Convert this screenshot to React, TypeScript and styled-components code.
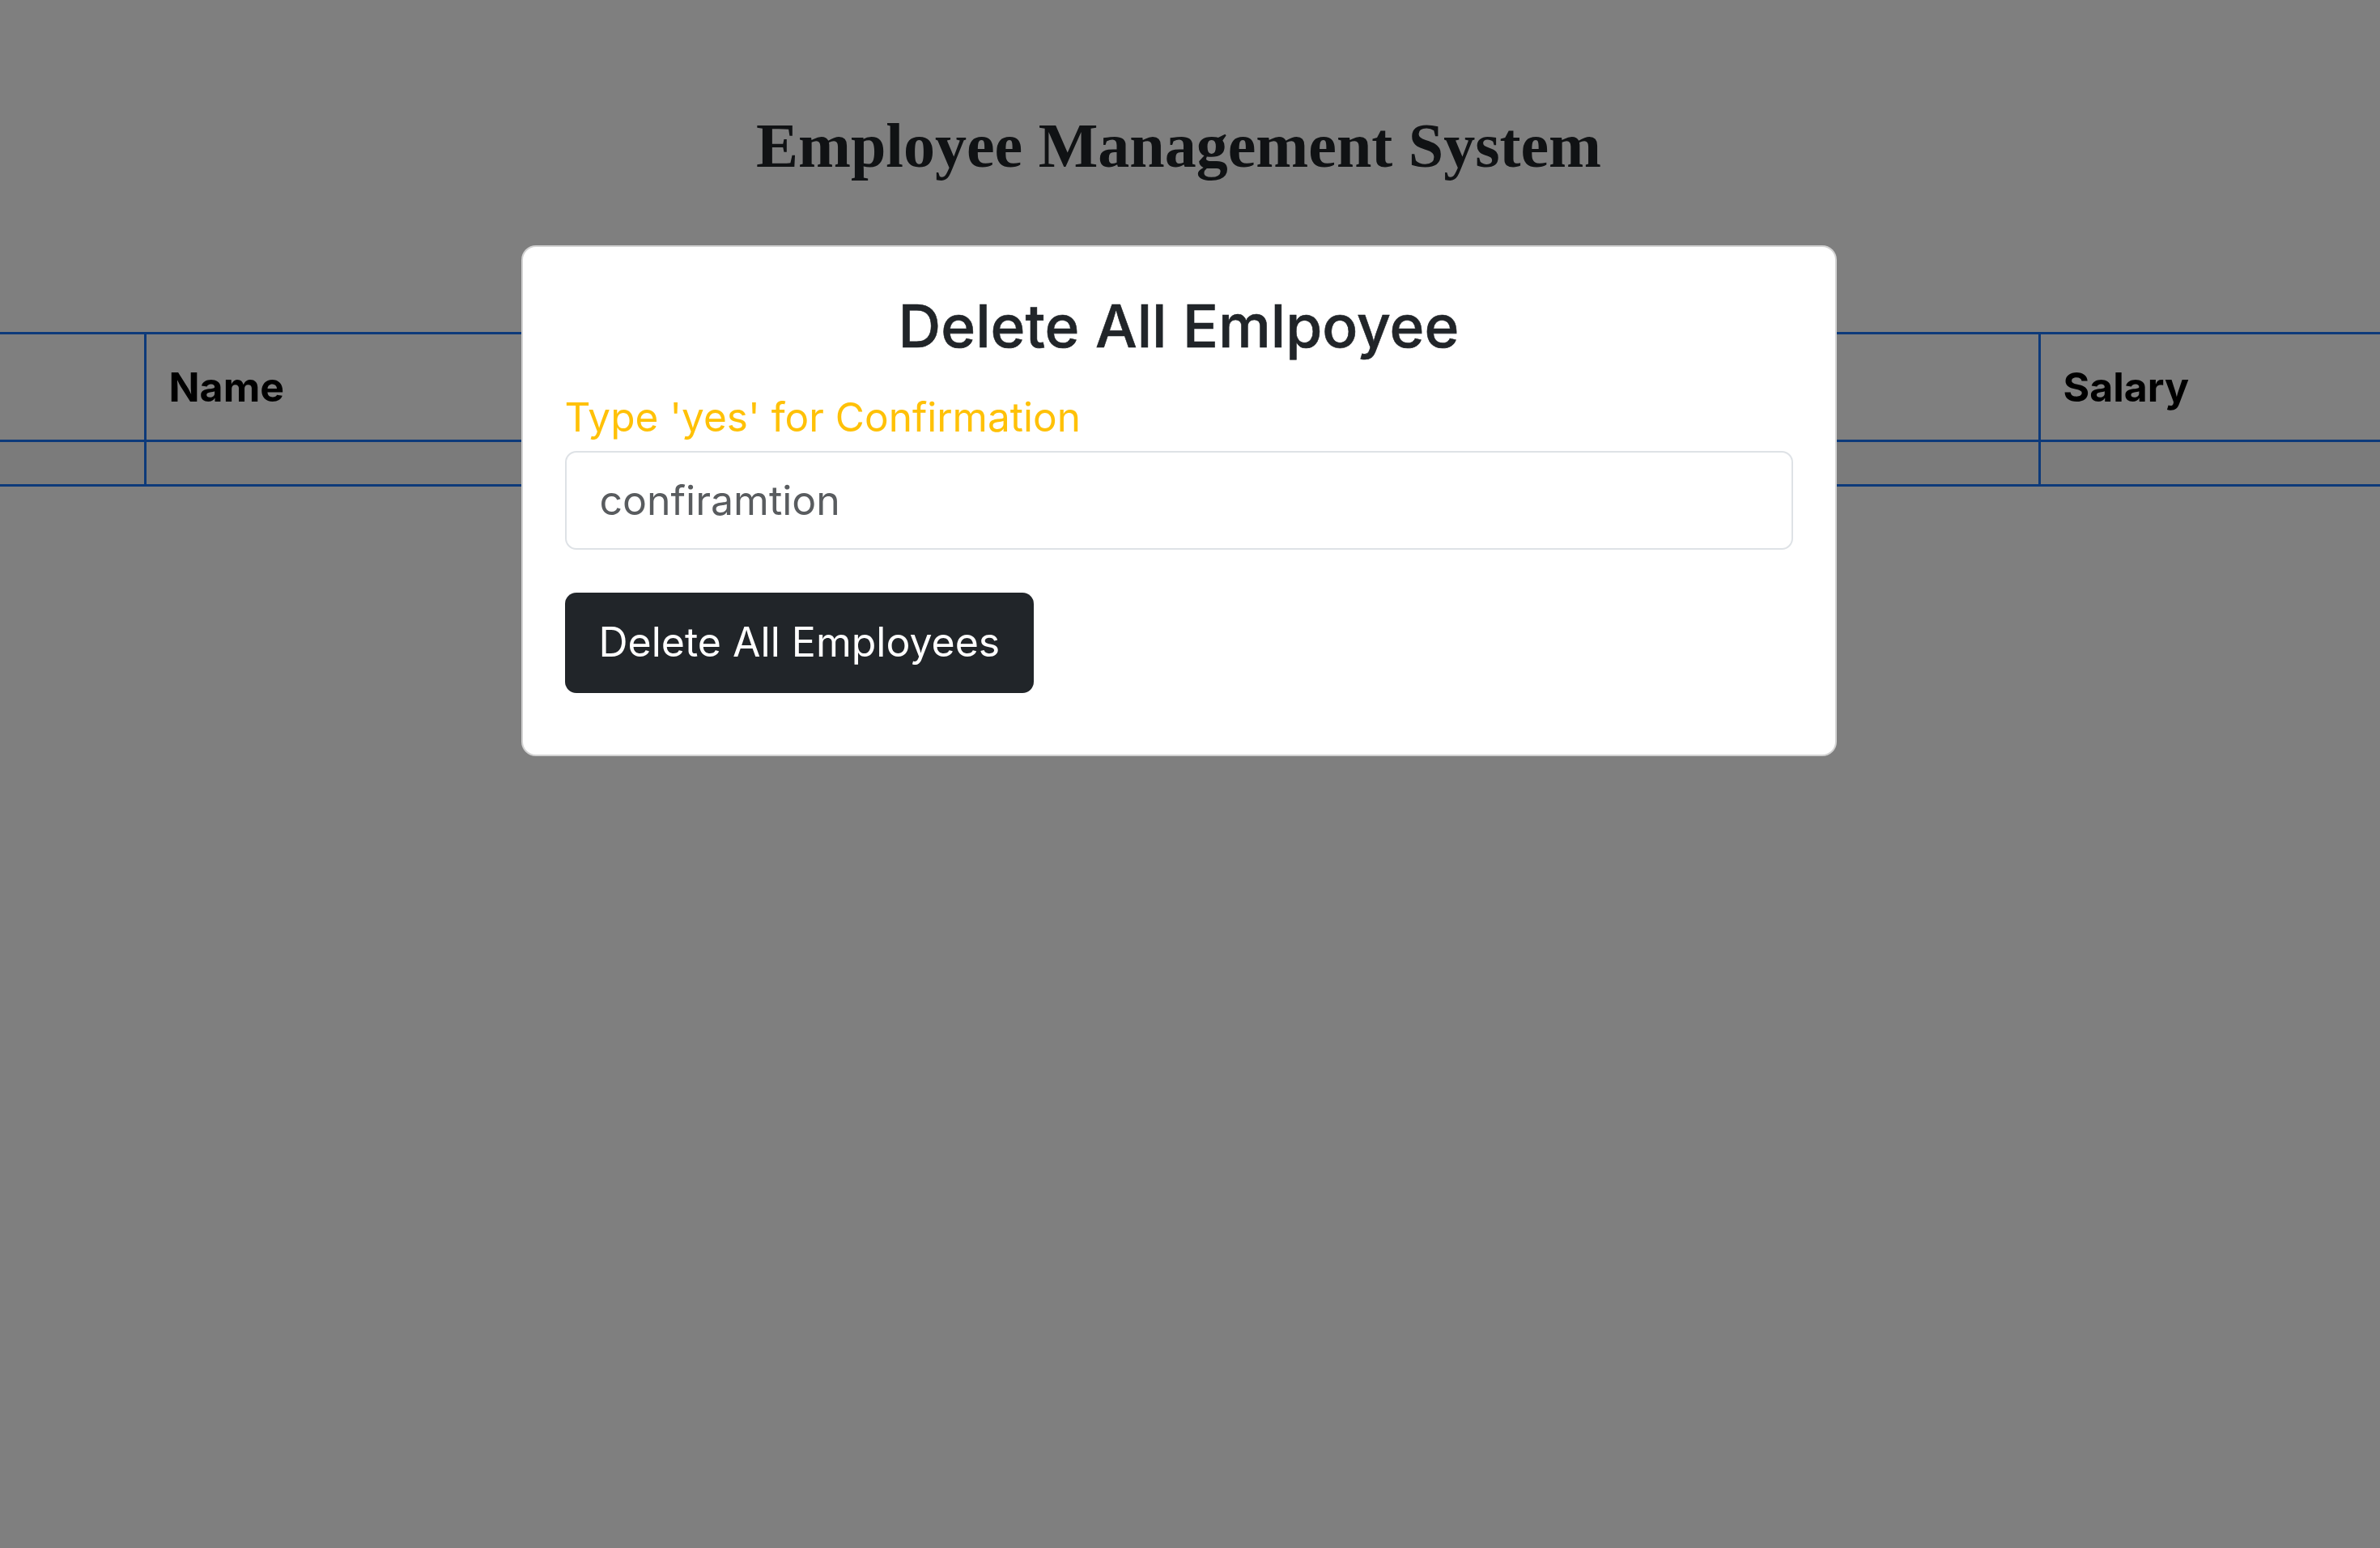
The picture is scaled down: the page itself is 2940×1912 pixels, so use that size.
import React from "react";
import styled, { createGlobalStyle } from "styled-components";

const GlobalStyle = createGlobalStyle`
  html, body {
    margin: 0;
    padding: 0;
    overflow: hidden;
    background: #ffffff;
  }
  * { box-sizing: border-box; }
`;

const Page = styled.div`
  width: 2912px;
  padding-top: 135px;
  font-family: Inter, "Liberation Sans", sans-serif;
`;

const Heading = styled.h1`
  margin: 0;
  text-align: center;
  font-family: "Liberation Serif", "Times New Roman", serif;
  font-weight: 700;
  font-size: 78px;
  line-height: normal;
  color: #212529;
`;

const Table = styled.table`
  margin-top: 185px;
  width: 3119px;
  table-layout: fixed;
  border-collapse: collapse;
  font-family: Inter, "Liberation Sans", sans-serif;
`;

const HeadCell = styled.th`
  border: 3px solid #1a74f4;
  padding: 28px 28px 27px;
  text-align: left;
  font-size: 50px;
  line-height: 1.5;
  font-weight: 700;
  color: #000;
  &:first-child { border-left: none; }
`;

const BodyRow = styled.tr`
  background: #f6f6f6;
`;

const BodyCell = styled.td`
  border: 3px solid #1a74f4;
  padding: 26px 28px 26px;
  &:first-child { border-left: none; }
`;

const Backdrop = styled.div`
  position: fixed;
  inset: 0;
  background: rgba(0, 0, 0, 0.5);
  display: flex;
  justify-content: center;
  align-items: flex-start;
  padding: 303px 28px 0 0;
`;

const Modal = styled.div`
  width: 1625px;
  background: #fff;
  border: 2px solid rgba(0, 0, 0, 0.175);
  border-radius: 18px;
  padding: 54px 52px 76px;
  display: flex;
  flex-direction: column;
  align-items: flex-start;
  font-family: Inter, "Liberation Sans", sans-serif;
  color: #212529;
`;

const ModalTitle = styled.h2`
  align-self: stretch;
  margin: 0 0 31px;
  text-align: center;
  font-size: 73px;
  font-weight: 500;
  line-height: 1.2;
  -webkit-text-stroke: 0.6px #212529;
`;

const Label = styled.label`
  font-size: 49.5px;
  line-height: 1.5;
  color: #ffc107;
  margin-bottom: 5px;
`;

const Input = styled.input`
  align-self: stretch;
  height: 122px;
  padding: 0 41px;
  border: 2px solid #dee2e6;
  border-radius: 14px;
  font-family: inherit;
  font-size: 50px;
  line-height: 1.5;
  color: #212529;
  background: #fff;
  outline: none;
  &::placeholder { color: rgba(33, 37, 41, 0.75); }
`;

const DangerButton = styled.button`
  margin-top: 53px;
  height: 124px;
  padding: 0 42px;
  border: none;
  border-radius: 14px;
  background: #212529;
  color: #fff;
  font-family: inherit;
  font-size: 50px;
  line-height: 1.5;
  cursor: pointer;
`;

const columns = [179, 900, 720, 720, 600];
const headers = ["", "Name", "", "", "Salary"];

export default function App() {
  return (
    <>
      <GlobalStyle />
      <Page>
        <Heading>Employee Management System</Heading>
        <Table>
          <colgroup>
            {columns.map((w, i) => (
              <col key={i} style={{ width: w }} />
            ))}
          </colgroup>
          <thead>
            <tr>
              {headers.map((h, i) => (
                <HeadCell key={i}>{h}</HeadCell>
              ))}
            </tr>
          </thead>
          <tbody>
            <BodyRow>
              {headers.map((_, i) => (
                <BodyCell key={i} />
              ))}
            </BodyRow>
          </tbody>
        </Table>
      </Page>
      <Backdrop>
        <Modal>
          <ModalTitle>Delete All Emlpoyee</ModalTitle>
          <Label htmlFor="confirm">Type 'yes' for Confirmation</Label>
          <Input id="confirm" placeholder="confiramtion" />
          <DangerButton>Delete All Employees</DangerButton>
        </Modal>
      </Backdrop>
    </>
  );
}
